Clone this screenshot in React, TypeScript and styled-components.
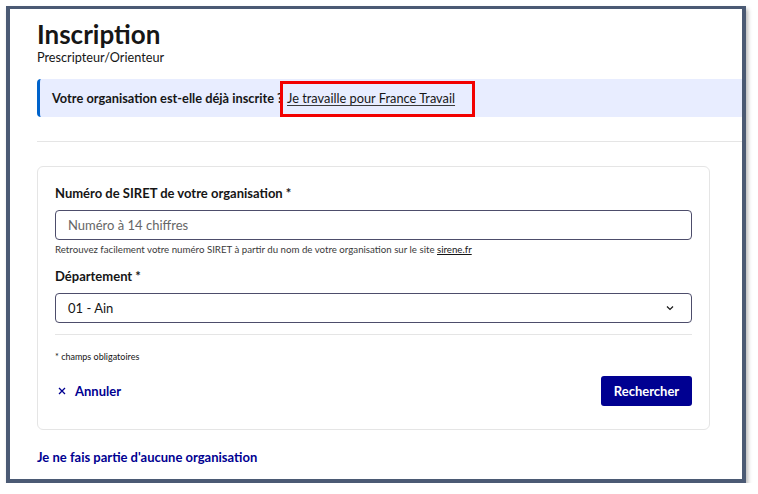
import React from "react";
import styled, { createGlobalStyle } from "styled-components";

const Global = createGlobalStyle`
  html, body { margin: 0; padding: 0; background: #ffffff; }
  body { font-family: Lato, "Noto Sans", sans-serif; color: #161616; }
  * { box-sizing: border-box; }
`;

const Frame = styled.div`
  margin: 6px 0 0 6px;
  width: 740px;
  height: 477px;
  border: 4px solid #4b5a74;
  border-top-width: 3px;
  box-shadow: 2px 3px 4px rgba(0, 0, 0, 0.28);
  background: #ffffff;
  overflow: hidden;
  padding-left: 27px;
`;

const Header = styled.header`
  padding-top: 11px;
`;

const Title = styled.h1`
  margin: 0;
  font-size: 26px;
  line-height: 28px;
  font-weight: 700;
  color: #161616;
`;

const Subtitle = styled.p`
  margin: 0;
  font-size: 12.7px;
  line-height: 18px;
`;

const Notice = styled.div`
  margin-top: 13px;
  height: 38px;
  display: flex;
  align-items: center;
  background: #e8edff;
  border-left: 3px solid #0063cb;
  border-radius: 4px 0 0 4px;
  padding-left: 12px;
  font-size: 12.8px;
  color: #161616;
`;

const NoticeText = styled.span`
  font-weight: 700;
`;

const NoticeLink = styled.a`
  position: relative;
  margin-left: 4px;
  color: #161616;
  text-decoration: underline;
  text-underline-offset: 2px;
  text-decoration-color: #3a3a3a;
  &::after {
    content: "";
    position: absolute;
    left: -7px;
    right: -20px;
    top: -9px;
    bottom: -11px;
    border: 3px solid #f20000;
  }
`;

const Rule = styled.hr`
  margin: 24px 0 0 0;
  border: 0;
  border-top: 1px solid #e5e5e5;
`;

const Card = styled.section`
  margin: 24px 32px 0 0;
  border: 1px solid #e5e5e5;
  border-radius: 6px;
  padding: 17px 17px 23px 17px;
`;

const Label = styled.label<{ $top?: number }>`
  display: block;
  margin-top: ${(p) => p.$top ?? 0}px;
  font-size: 13px;
  line-height: 18px;
  font-weight: 700;
`;

const Field = styled.div`
  margin-top: 8px;
  height: 30px;
  border: 1px solid #4d4d6b;
  border-radius: 4px;
  display: flex;
  align-items: center;
  justify-content: space-between;
  padding: 0 17px 0 12px;
  font-size: 13px;
`;

const Placeholder = styled.span`
  color: #666666;
`;

const Hint = styled.p`
  margin: 3px 0 0 0;
  font-size: 9.7px;
  line-height: 13px;
  color: #3a3a3a;
`;

const HintLink = styled.a`
  color: #161616;
  text-decoration: underline;
`;

const Divider = styled.div`
  margin-top: 11px;
  border-top: 1px solid #e5e5e5;
`;

const Required = styled.p`
  margin: 16px 0 0 0;
  font-size: 9px;
  line-height: 12px;
  color: #161616;
`;

const Actions = styled.div`
  margin-top: 13px;
  display: flex;
  align-items: center;
  justify-content: space-between;
`;

const Cancel = styled.button`
  border: 0;
  background: none;
  padding: 0 0 0 3px;
  display: flex;
  align-items: center;
  gap: 9px;
  font-family: inherit;
  font-size: 13px;
  font-weight: 700;
  color: #000091;
`;

const Primary = styled.button`
  height: 30px;
  width: 91px;
  border: 0;
  border-radius: 3px;
  background: #000091;
  color: #ffffff;
  font-family: inherit;
  font-size: 13px;
  font-weight: 700;
`;

const BottomLink = styled.a`
  display: block;
  margin-top: 19px;
  font-size: 13px;
  font-weight: 700;
  color: #000091;
  text-decoration: none;
`;

const Chevron = () => (
  <svg width="8" height="6" viewBox="0 0 8 6" fill="none">
    <path d="M1 1.5 L4 4.5 L7 1.5" stroke="#161616" strokeWidth="1.2" />
  </svg>
);

const Cross = () => (
  <svg width="8" height="8" viewBox="0 0 8 8" fill="none">
    <path d="M1 1 L7 7 M7 1 L1 7" stroke="#000091" strokeWidth="1.3" />
  </svg>
);

export default function App() {
  return (
    <>
      <Global />
      <Frame>
        <Header>
          <Title>Inscription</Title>
          <Subtitle>Prescripteur/Orienteur</Subtitle>
        </Header>
        <Notice>
          <NoticeText>Votre organisation est-elle déjà inscrite ?</NoticeText>
          <NoticeLink href="#">Je travaille pour France Travail</NoticeLink>
        </Notice>
        <Rule />
        <Card>
          <Label>Numéro de SIRET de votre organisation *</Label>
          <Field>
            <Placeholder>Numéro à 14 chiffres</Placeholder>
          </Field>
          <Hint>
            Retrouvez facilement votre numéro SIRET à partir du nom de votre organisation sur le site{" "}
            <HintLink href="#">sirene.fr</HintLink>
          </Hint>
          <Label $top={11}>Département *</Label>
          <Field>
            <span>01 - Ain</span>
            <Chevron />
          </Field>
          <Divider />
          <Required>* champs obligatoires</Required>
          <Actions>
            <Cancel>
              <Cross />
              Annuler
            </Cancel>
            <Primary>Rechercher</Primary>
          </Actions>
        </Card>
        <BottomLink href="#">Je ne fais partie d'aucune organisation</BottomLink>
      </Frame>
    </>
  );
}
